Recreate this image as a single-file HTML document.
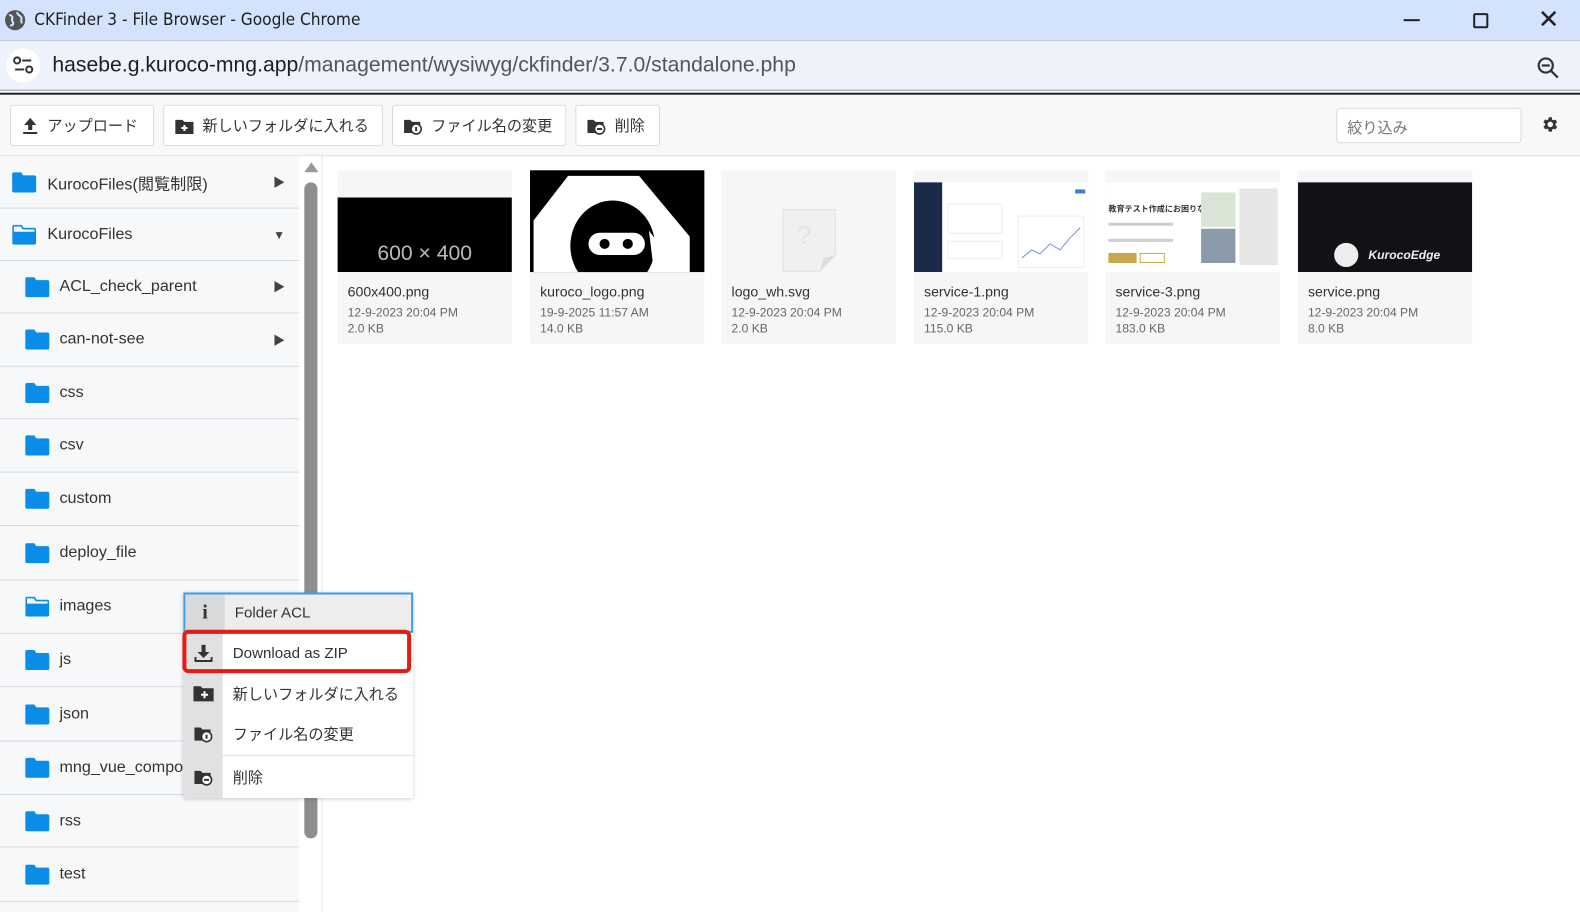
<!DOCTYPE html>
<html><head><meta charset="utf-8"><style>
*{box-sizing:border-box;margin:0;padding:0}
html,body{width:1580px;height:905px;overflow:hidden}
body{font-family:"Liberation Sans","Noto Sans CJK JP",sans-serif;background:#fff;color:#333}
#wrap{position:absolute;left:0;top:0;width:1568px;height:898px;transform:scale(1.00766);transform-origin:0 0}
.abs{position:absolute}
.title{left:0;top:0;width:1568px;height:41px;background:#d3e3fd;border-bottom:1px solid #b8c4d6}
.addr{left:0;top:41px;width:1568px;height:49px;background:#eef2fa;border-bottom:1px solid #999}
.tb{left:0;top:92px;width:1568px;height:63px;background:#f7f8f9;border-top:2px solid #222;border-bottom:1px solid #dde0e3}
.btn{position:absolute;top:10px;height:41px;background:#fff;border:1px solid #d8dbde;border-radius:3px;font-size:15px;color:#333;display:flex;align-items:center;padding-left:10px;gap:8px}
.side{left:0;top:155px;width:297px;height:750px;background:#f7f8fa}
.row{position:absolute;left:0;width:297px;border-bottom:1px solid #d8dbde;display:flex;align-items:center;font-size:16px;color:#333}
.row svg.f{flex:none}
.arr{position:absolute;right:14px;font-size:12px;color:#444}
.card{position:absolute;top:169px;width:173px;height:172px;background:#f5f6f8}
.card .img{position:absolute;left:0;top:0;width:173px;height:101px;overflow:hidden}
.card .n{position:absolute;left:10px;top:112px;font-size:14px;color:#333}
.card .d{position:absolute;left:10px;top:133px;font-size:12px;color:#666;line-height:16px}
.menu{left:182px;top:588px;width:228px;height:204px;background:#fff;box-shadow:0 1px 4px rgba(0,0,0,.25)}
.mi{position:absolute;left:0;width:228px;height:40px;display:flex;align-items:center;font-size:15px;color:#333}
.mi .ic{width:39px;height:100%;display:flex;align-items:center;justify-content:center}
.mi .t{padding-left:10px}
</style></head><body><div id="wrap">
<div class="abs title">
 <svg class="abs" style="left:4px;top:9px" width="22" height="22" viewBox="0 0 22 22"><circle cx="11" cy="11" r="10" fill="#555"/><path d="M5 6c3 0 4 2 3 4s2 3 1 5-3 1-3 1M13 3c0 3 3 3 4 5s-1 4 1 6" stroke="#d3e3fd" stroke-width="2" fill="none"/></svg>
 <div class="abs" style="left:34px;top:10px;font-size:17px;color:#1f1f1f;font-family:'DejaVu Sans Condensed','Liberation Sans',sans-serif">CKFinder 3 - File Browser - Google Chrome</div>
 <div class="abs" style="left:1393px;top:19px;width:16px;height:2px;background:#222"></div>
 <div class="abs" style="left:1462px;top:13px;width:15px;height:15px;border:2px solid #222;border-radius:2px"></div>
 <div class="abs" style="left:1526px;top:4px;font-size:26px;color:#222">✕</div>
</div>
<div class="abs addr">
 <div class="abs" style="left:6px;top:7px;width:34px;height:34px;border-radius:50%;background:#fff"></div>
 <svg class="abs" style="left:12px;top:14px" width="22" height="20" viewBox="0 0 22 20"><circle cx="5" cy="5" r="3" fill="none" stroke="#333" stroke-width="2"/><path d="M10 5h9M3 14h9" stroke="#333" stroke-width="2"/><circle cx="17" cy="14" r="3" fill="none" stroke="#333" stroke-width="2"/></svg>
 <div class="abs" style="left:52px;top:12px;font-size:21px;color:#1f1f1f">hasebe.g.kuroco-mng.app<span style="color:#555">/management/wysiwyg/ckfinder/3.7.0/standalone.php</span></div>
 <svg class="abs" style="left:1524px;top:14px" width="26" height="26" viewBox="0 0 26 26"><circle cx="10" cy="10" r="7" fill="none" stroke="#333" stroke-width="2.2"/><path d="M6 10h8M15 15l7 7" stroke="#333" stroke-width="2.2"/></svg>
</div>
<div class="abs tb">
 <div class="btn" style="left:10px;width:143px"><svg width="18" height="18" viewBox="0 0 18 18"><path d="M9 1l6 7h-4v5H7V8H3z M2 15h14v2H2z" fill="#333"/></svg>アップロード</div>
 <div class="btn" style="left:162px;width:218px"><svg width="20" height="18" viewBox="0 0 20 18"><path d="M1 3h7l2 2h9v12H1z" fill="#333"/><path d="M10 8v6M7 11h6" stroke="#fff" stroke-width="2"/></svg>新しいフォルダに入れる</div>
 <div class="btn" style="left:389px;width:173px"><svg width="20" height="18" viewBox="0 0 20 18"><path d="M1 3h6l2 2h8v4H1z" fill="#333"/><path d="M1 8h9v8H1z" fill="#333"/><circle cx="13" cy="12" r="5" fill="#fff" stroke="#333" stroke-width="1.6"/><path d="M13 10v4" stroke="#333" stroke-width="2"/></svg>ファイル名の変更</div>
 <div class="btn" style="left:571px;width:84px"><svg width="20" height="18" viewBox="0 0 20 18"><path d="M1 3h6l2 2h8v4H1z M1 8h9v8H1z" fill="#333"/><circle cx="13" cy="12" r="5" fill="#fff" stroke="#333" stroke-width="1.6"/><path d="M10.5 12h5" stroke="#333" stroke-width="2"/></svg>削除</div>
 <div class="abs" style="left:1326px;top:13px;width:184px;height:35px;background:#fff;border:1px solid #d8dbde;border-radius:4px;font-size:15px;color:#777;padding:8px 10px">絞り込み</div>
 <svg class="abs" style="left:1529px;top:20px" width="19" height="19" viewBox="0 0 24 24"><path fill="#333" d="M19.4 13a7.5 7.5 0 000-2l2.1-1.6-2-3.5-2.5 1a7 7 0 00-1.7-1L15 3h-4l-.4 2.7a7 7 0 00-1.7 1l-2.5-1-2 3.5L6.6 11a7.5 7.5 0 000 2l-2.2 1.6 2 3.5 2.5-1a7 7 0 001.7 1L11 21h4l.4-2.7a7 7 0 001.7-1l2.5 1 2-3.5zM13 15.5a3.5 3.5 0 110-7 3.5 3.5 0 010 7z" transform="translate(-1 0)"/></svg>
</div>
<div class="abs side"></div>
<div class="abs" style="left:297px;top:155px;width:23px;height:750px;background:#fff;border-right:1px solid #e3e5e8"></div>
<div class="abs" style="left:302px;top:161px;width:0;height:0;border-left:7px solid transparent;border-right:7px solid transparent;border-bottom:10px solid #999"></div>
<div class="abs" style="left:302px;top:181px;width:13px;height:651px;background:#8e8e8e;border-radius:7px"></div>

<div class="row" style="top:155px;height:52px"><svg class="f" style="margin-left:12px" width="24" height="20" viewBox="0 0 24 20"><path d="M0 2a2 2 0 012-2h7l2 3h11a2 2 0 012 2v13a2 2 0 01-2 2H2a2 2 0 01-2-2z" fill="#0a8de8"/></svg><span style="margin-left:11px">KurocoFiles(閲覧制限)</span><span class="arr">▶</span></div>
<div class="row" style="top:207px;height:52px"><svg class="f" style="margin-left:12px" width="24" height="20" viewBox="0 0 24 20"><path d="M1 2a1 1 0 011-1h7l2 3h11a1 1 0 011 1v13a1 1 0 01-1 1H2a1 1 0 01-1-1z" fill="none" stroke="#0a8de8" stroke-width="1.6"/><path d="M1 7h22v12H1z" fill="#0a8de8"/></svg><span style="margin-left:11px">KurocoFiles</span><span class="arr">▼</span></div>
<div class="row" style="top:259px;height:52px"><svg class="f" style="margin-left:25px" width="24" height="20" viewBox="0 0 24 20"><path d="M0 2a2 2 0 012-2h7l2 3h11a2 2 0 012 2v13a2 2 0 01-2 2H2a2 2 0 01-2-2z" fill="#0a8de8"/></svg><span style="margin-left:10px">ACL_check_parent</span><span class="arr">▶</span></div>
<div class="row" style="top:311px;height:53px"><svg class="f" style="margin-left:25px" width="24" height="20" viewBox="0 0 24 20"><path d="M0 2a2 2 0 012-2h7l2 3h11a2 2 0 012 2v13a2 2 0 01-2 2H2a2 2 0 01-2-2z" fill="#0a8de8"/></svg><span style="margin-left:10px">can-not-see</span><span class="arr">▶</span></div>
<div class="row" style="top:364px;height:52px"><svg class="f" style="margin-left:25px" width="24" height="20" viewBox="0 0 24 20"><path d="M0 2a2 2 0 012-2h7l2 3h11a2 2 0 012 2v13a2 2 0 01-2 2H2a2 2 0 01-2-2z" fill="#0a8de8"/></svg><span style="margin-left:10px">css</span></div>
<div class="row" style="top:416px;height:53px"><svg class="f" style="margin-left:25px" width="24" height="20" viewBox="0 0 24 20"><path d="M0 2a2 2 0 012-2h7l2 3h11a2 2 0 012 2v13a2 2 0 01-2 2H2a2 2 0 01-2-2z" fill="#0a8de8"/></svg><span style="margin-left:10px">csv</span></div>
<div class="row" style="top:469px;height:53px"><svg class="f" style="margin-left:25px" width="24" height="20" viewBox="0 0 24 20"><path d="M0 2a2 2 0 012-2h7l2 3h11a2 2 0 012 2v13a2 2 0 01-2 2H2a2 2 0 01-2-2z" fill="#0a8de8"/></svg><span style="margin-left:10px">custom</span></div>
<div class="row" style="top:522px;height:54px"><svg class="f" style="margin-left:25px" width="24" height="20" viewBox="0 0 24 20"><path d="M0 2a2 2 0 012-2h7l2 3h11a2 2 0 012 2v13a2 2 0 01-2 2H2a2 2 0 01-2-2z" fill="#0a8de8"/></svg><span style="margin-left:10px">deploy_file</span></div>
<div class="row" style="top:576px;height:53px"><svg class="f" style="margin-left:25px" width="24" height="20" viewBox="0 0 24 20"><path d="M1 2a1 1 0 011-1h7l2 3h11a1 1 0 011 1v13a1 1 0 01-1 1H2a1 1 0 01-1-1z" fill="none" stroke="#0a8de8" stroke-width="1.6"/><path d="M1 7h22v12H1z" fill="#0a8de8"/></svg><span style="margin-left:10px">images</span></div>
<div class="row" style="top:629px;height:53px"><svg class="f" style="margin-left:25px" width="24" height="20" viewBox="0 0 24 20"><path d="M0 2a2 2 0 012-2h7l2 3h11a2 2 0 012 2v13a2 2 0 01-2 2H2a2 2 0 01-2-2z" fill="#0a8de8"/></svg><span style="margin-left:10px">js</span></div>
<div class="row" style="top:682px;height:54px"><svg class="f" style="margin-left:25px" width="24" height="20" viewBox="0 0 24 20"><path d="M0 2a2 2 0 012-2h7l2 3h11a2 2 0 012 2v13a2 2 0 01-2 2H2a2 2 0 01-2-2z" fill="#0a8de8"/></svg><span style="margin-left:10px">json</span></div>
<div class="row" style="top:736px;height:53px"><svg class="f" style="margin-left:25px" width="24" height="20" viewBox="0 0 24 20"><path d="M0 2a2 2 0 012-2h7l2 3h11a2 2 0 012 2v13a2 2 0 01-2 2H2a2 2 0 01-2-2z" fill="#0a8de8"/></svg><span style="margin-left:10px">mng_vue_components</span></div>
<div class="row" style="top:789px;height:52px"><svg class="f" style="margin-left:25px" width="24" height="20" viewBox="0 0 24 20"><path d="M0 2a2 2 0 012-2h7l2 3h11a2 2 0 012 2v13a2 2 0 01-2 2H2a2 2 0 01-2-2z" fill="#0a8de8"/></svg><span style="margin-left:10px">rss</span></div>
<div class="row" style="top:841px;height:54px"><svg class="f" style="margin-left:25px" width="24" height="20" viewBox="0 0 24 20"><path d="M0 2a2 2 0 012-2h7l2 3h11a2 2 0 012 2v13a2 2 0 01-2 2H2a2 2 0 01-2-2z" fill="#0a8de8"/></svg><span style="margin-left:10px">test</span></div>

<div class="card" style="left:335px"><div class="img"><div class="abs" style="left:0;top:27px;width:173px;height:74px;background:#000;color:#bbb;font-size:21px;text-align:center;padding-top:46px;line-height:20px">600 × 400</div></div><div class="n">600x400.png</div><div class="d">12-9-2023 20:04 PM<br>2.0 KB</div></div>
<div class="card" style="left:526px"><div class="img" style="background:#000"><svg width="173" height="101" viewBox="0 0 173 101"><path d="M4 101V50L38 6h70l50 60v35z" fill="#fff" stroke="#fff"/><ellipse cx="82" cy="75" rx="42" ry="45" fill="#000"/><path d="M118 60c8 10 15 20 25 41h-20z" fill="#fff"/><rect x="58" y="62" width="56" height="22" rx="11" fill="#fff"/><circle cx="74" cy="73" r="5" fill="#000"/><circle cx="97" cy="73" r="5" fill="#000"/></svg></div><div class="n">kuroco_logo.png</div><div class="d">19-9-2025 11:57 AM<br>14.0 KB</div></div>
<div class="card" style="left:716px"><div class="img"><svg class="abs" style="left:60px;top:38px" width="54" height="63" viewBox="0 0 54 63"><path d="M1 1h52v45L38 62H1z" fill="#f0f0f0" stroke="#e0e0e0"/><path d="M38 62l3-13 12-3z" fill="#ddd"/><text x="15" y="35" font-size="26" fill="#e3e3e3" font-family="Liberation Sans">?</text></svg></div><div class="n">logo_wh.svg</div><div class="d">12-9-2023 20:04 PM<br>2.0 KB</div></div>
<div class="card" style="left:907px"><div class="img"><div class="abs" style="left:0;top:12px;width:173px;height:89px;background:#fff"></div><div class="abs" style="left:0;top:12px;width:28px;height:89px;background:#1c2a4a"></div><div class="abs" style="left:33px;top:33px;width:55px;height:30px;background:#fff;border:1px solid #eee"></div><div class="abs" style="left:33px;top:70px;width:55px;height:18px;border:1px solid #eee"></div><div class="abs" style="left:103px;top:45px;width:66px;height:52px;border:1px solid #eee"></div><svg class="abs" style="left:105px;top:55px" width="62" height="35"><path d="M2 32l10-8 8 4 10-10 10 6 10-12 10-10" stroke="#6d8ee8" fill="none"/></svg><div class="abs" style="left:160px;top:19px;width:10px;height:4px;background:#3b7ae0"></div></div><div class="n">service-1.png</div><div class="d">12-9-2023 20:04 PM<br>115.0 KB</div></div>
<div class="card" style="left:1097px"><div class="img"><div class="abs" style="left:0;top:12px;width:173px;height:89px;background:#fff"></div><div class="abs" style="left:3px;top:33px;font-size:8px;font-weight:bold;color:#333">教育テスト作成にお困りなら</div><div class="abs" style="left:3px;top:52px;width:64px;height:3px;background:#ccc"></div><div class="abs" style="left:3px;top:68px;width:64px;height:3px;background:#ccc"></div><div class="abs" style="left:3px;top:82px;width:28px;height:10px;background:#c8a84a"></div><div class="abs" style="left:34px;top:82px;width:25px;height:10px;border:1px solid #c8a84a"></div><div class="abs" style="left:95px;top:22px;width:34px;height:34px;background:#d8e4d4"></div><div class="abs" style="left:95px;top:58px;width:34px;height:34px;background:#8a9aaa"></div><div class="abs" style="left:133px;top:18px;width:38px;height:76px;background:#e6e6e6"></div></div><div class="n">service-3.png</div><div class="d">12-9-2023 20:04 PM<br>183.0 KB</div></div>
<div class="card" style="left:1288px"><div class="img"><div class="abs" style="left:0;top:12px;width:173px;height:89px;background:#111215"></div><div class="abs" style="left:36px;top:72px;width:24px;height:24px;border-radius:50%;background:#eee"></div><div class="abs" style="left:70px;top:77px;font-size:12px;font-style:italic;font-weight:bold;color:#eee">KurocoEdge</div></div><div class="n">service.png</div><div class="d">12-9-2023 20:04 PM<br>8.0 KB</div></div>

<div class="abs menu">
 <div class="abs" style="left:0;top:0;width:39px;height:204px;background:#e0e1e3"></div>
 <div class="mi" style="top:0;background:#ededed;border:2px solid #3d9ef0"><div class="ic" style="font-family:'Liberation Serif',serif;font-weight:bold;font-size:20px;background:#d8d9db">i</div><div class="t">Folder ACL</div></div>
 <div class="mi" style="top:40px"><div class="ic"><svg width="18" height="18" viewBox="0 0 18 18"><path d="M7 1h4v7h4l-6 6-6-6h4z" fill="#333"/><path d="M1 13v4h16v-4" fill="none" stroke="#333" stroke-width="2"/></svg></div><div class="t">Download as ZIP</div></div>
 <div class="mi" style="top:80px"><div class="ic"><svg width="22" height="18" viewBox="0 0 22 18"><path d="M1 2h7l2 2h11v13H1z" fill="#333"/><path d="M12 7v7M8.5 10.5h7" stroke="#fff" stroke-width="2"/></svg></div><div class="t">新しいフォルダに入れる</div></div>
 <div class="mi" style="top:120px"><div class="ic"><svg width="20" height="18" viewBox="0 0 20 18"><path d="M1 3h6l2 2h8v4H1z M1 8h9v8H1z" fill="#333"/><circle cx="13" cy="12" r="5" fill="#fff" stroke="#333" stroke-width="1.6"/><path d="M13 10v4" stroke="#333" stroke-width="2"/></svg></div><div class="t">ファイル名の変更</div></div>
 <div class="abs" style="left:39px;top:161px;width:189px;height:1px;background:#ddd"></div>
 <div class="mi" style="top:162px;height:42px"><div class="ic"><svg width="20" height="18" viewBox="0 0 20 18"><path d="M1 3h6l2 2h8v4H1z M1 8h9v8H1z" fill="#333"/><circle cx="13" cy="12" r="5" fill="#fff" stroke="#333" stroke-width="1.6"/><path d="M10.5 12h5" stroke="#333" stroke-width="2"/></svg></div><div class="t">削除</div></div>
</div>
<div class="abs" style="left:181px;top:625px;width:227px;height:43px;border:4px solid #e41c12;border-radius:6px"></div>
</div></body></html>
